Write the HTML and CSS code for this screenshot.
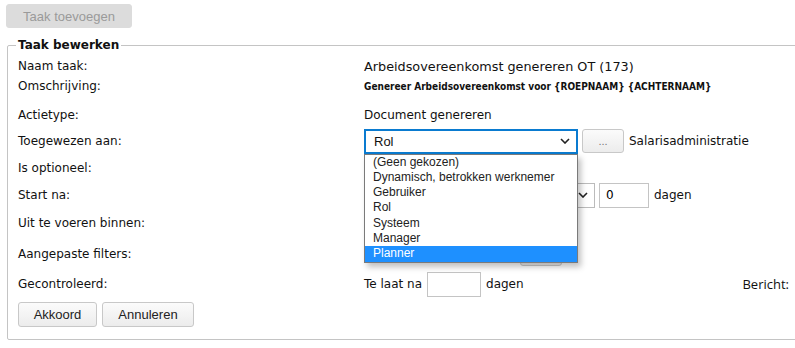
FILE: index.html
```html
<!DOCTYPE html>
<html lang="nl">
    <head>
        <meta charset="UTF-8">
        <title>Taak bewerken</title>
        <link rel="stylesheet" href="styles.css">
    </head>
    <body>
        <div class="toolbar">
            <button class="btn" disabled>Taak toevoegen</button>
        </div>
        <fieldset class="edit">
            <legend>Taak bewerken</legend>
            <div class="row r-naam">
                <span class="lbl">Naam taak:</span>
                <span class="title">Arbeidsovereenkomst genereren OT (173)</span>
            </div>
            <div class="row r-oms">
                <span class="lbl">Omschrijving:</span>
                <span class="desc">Genereer Arbeidsovereenkomst voor {ROEPNAAM} {ACHTERNAAM}</span>
            </div>
            <div class="row r-actie">
                <span class="lbl">Actietype:</span>
                <span>Document genereren</span>
            </div>
            <div class="row r-toe">
                <span class="lbl">Toegewezen aan:</span>
                <div class="ctrls">
                    <div class="select-wrap">
                        <div class="select focus">
                            <span>Rol</span>
                            <svg class="chev" width="10" height="6" viewBox="0 0 10 6"><path d="M1 1l4 4 4-4" fill="none" stroke="#222" stroke-width="1.6"/></svg>
                        </div>
                        <ul class="dropdown">
                            <li>(Geen gekozen)</li>
                            <li>Dynamisch, betrokken werknemer</li>
                            <li>Gebruiker</li>
                            <li>Rol</li>
                            <li>Systeem</li>
                            <li>Manager</li>
                            <li class="sel">Planner</li>
                        </ul>
                    </div>
                    <button class="btn small">...</button>
                    <span class="val">Salarisadministratie</span>
                </div>
            </div>
            <div class="row r-opt">
                <span class="lbl">Is optioneel:</span>
            </div>
            <div class="row r-start">
                <span class="lbl">Start na:</span>
                <div class="ctrls">
                    <div class="select short">
                        <span></span>
                        <svg class="chev" width="10" height="6" viewBox="0 0 10 6"><path d="M1 1l4 4 4-4" fill="none" stroke="#222" stroke-width="1.6"/></svg>
                    </div>
                    <input class="num" type="text" value="0">
                    <span class="val">dagen</span>
                </div>
            </div>
            <div class="row r-uit">
                <span class="lbl">Uit te voeren binnen:</span>
            </div>
            <div class="row r-filter">
                <span class="lbl">Aangepaste filters:</span>
                <div class="ctrls">
                    <button class="btn hidden-btn">...</button>
                </div>
            </div>
            <div class="row r-gec">
                <span class="lbl">Gecontroleerd:</span>
                <div class="ctrls wide">
                    <span class="val">Te laat na</span>
                    <input class="num late" type="text" value="">
                    <span class="val">dagen</span>
                    <span class="bericht">Bericht:</span>
                </div>
            </div>
            <div class="actions">
                <button class="btn ok">Akkoord</button>
                <button class="btn cancel">Annuleren</button>
            </div>
        </fieldset>
    </body>
</html>
```
FILE: styles.css
```css
body {
    margin: 0;
    padding: 4px 0 0 6px;
    font-family: "DejaVu Sans", sans-serif;
    font-size: 12px;
    color: #111;
    background: #fff;
    overflow: hidden;
}
.btn {
    font-family: "Liberation Sans", Arial, sans-serif;
    font-size: 13px;
    color: #222;
    background: linear-gradient(#fbfbfb, #ececec);
    border: 1px solid #c8c8c8;
    border-radius: 3px;
    height: 24px;
    padding: 0 14px;
}
.toolbar .btn {
    width: 126px;
    background: #dcdcdc;
    border-color: #dcdcdc;
    color: #9a9a9a;
}
fieldset.edit {
    margin: 10px -10px 0 1px;
    padding: 0 0 10px 10px;
    border: 1px solid #c4c4c4;
    border-radius: 2px;
    height: 290px;
}
legend {
    font-weight: bold;
    font-size: 12px;
    padding: 0 2px;
    margin-left: -2px;
}
.row {
    display: grid;
    grid-template-columns: 346px 1fr;
    align-items: center;
}
.r-naam { height: 18px; margin-top: 5px; }
.r-oms { height: 22px; }
.r-actie { height: 26px; margin-top: 5px; }
.r-toe { height: 26px; }
.r-opt { height: 28px; }
.r-start { height: 26px; }
.r-uit { height: 30px; }
.r-filter { height: 32px; }
.r-gec { height: 28px; }
.title {
    font-size: 12.8px;
}
.desc {
    font-family: "DejaVu Sans Condensed", sans-serif;
    font-weight: bold;
    font-size: 10px;
}
.ctrls {
    display: flex;
    align-items: center;
    gap: 5px;
}
.select-wrap {
    position: relative;
}
.select {
    display: flex;
    justify-content: space-between;
    align-items: center;
    box-sizing: border-box;
    width: 214px;
    height: 25px;
    border: 1px solid #bbb;
    padding: 0 6px 0 9px;
    font-family: "Liberation Sans", Arial, sans-serif;
    font-size: 13px;
    background: #fff;
}
.select.focus {
    border: 2px solid #0a7bd0;
    padding-left: 8px;
}
.select.short {
    width: 231px;
}
.dropdown {
    position: absolute;
    left: 0;
    top: 25px;
    z-index: 5;
    width: 214px;
    box-sizing: border-box;
    margin: 0;
    padding: 0;
    list-style: none;
    background: #fff;
    border: 1px solid #7a7a7a;
    box-shadow: 3px 4px 6px rgba(0, 0, 0, 0.25);
    font-family: "Liberation Sans", Arial, sans-serif;
    font-size: 12px;
    color: #222;
}
.dropdown li {
    height: 15.33px;
    line-height: 15px;
    padding-left: 8px;
}
.dropdown li.sel {
    background: #1e90ff;
    color: #fff;
}
.btn.small {
    width: 42px;
    padding: 0;
    margin-left: -1px;
    color: #777;
    font-size: 11px;
}
.num {
    box-sizing: border-box;
    width: 50px;
    height: 25px;
    border: 1px solid #c4c4c4;
    padding: 0 6px;
    font-family: "DejaVu Sans", sans-serif;
    font-size: 12px;
}
.r-start .num {
    margin-left: -1px;
}
.num.late {
    width: 54px;
}
.hidden-btn {
    margin-left: 156px;
    width: 42px;
}
.wide {
    padding-right: 15px;
}
.bericht {
    margin-left: auto;
    font-family: "Open Sans", sans-serif;
    font-size: 13px;
}
.actions {
    display: flex;
    gap: 5px;
    margin-top: 4px;
}
.actions .btn {
    height: 25px;
    padding: 0;
}
.btn.ok {
    width: 79px;
}
.btn.cancel {
    width: 92px;
}
```
